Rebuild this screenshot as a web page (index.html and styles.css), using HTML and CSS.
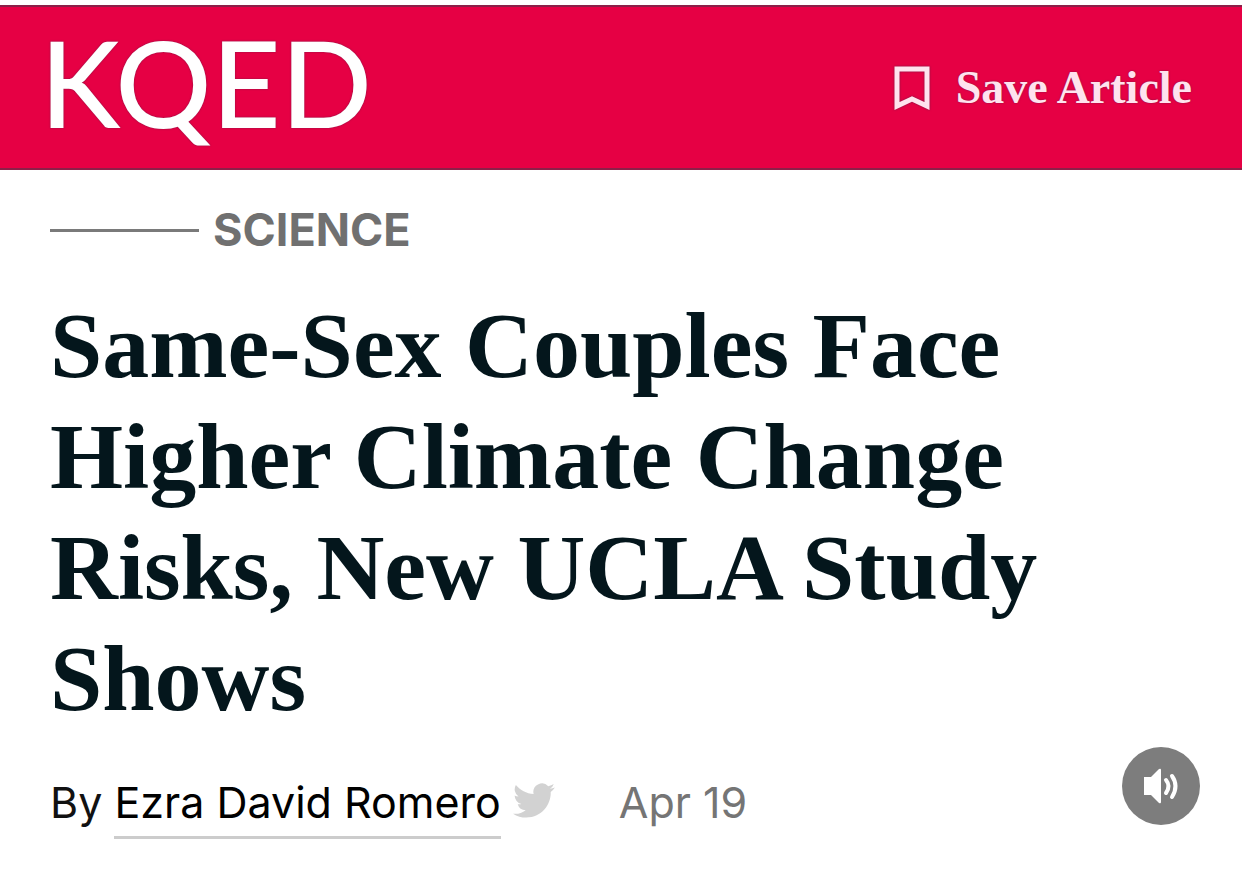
FILE: index.html
```
<!DOCTYPE html>
<html lang="en">
<head>
<meta charset="utf-8">
<meta name="viewport" content="width=device-width, initial-scale=1">
<title>Same-Sex Couples Face Higher Climate Change Risks - KQED</title>
<link rel="stylesheet" href="styles.css">
</head>
<body>
<header class="site-header">
  <a class="logo" href="#">KQED</a>
  <button class="save" type="button">
    <svg class="save-icon" viewBox="0 0 36 44" aria-hidden="true"><path d="M3 3H33V40L18 33L3 40Z" fill="none" stroke="currentColor" stroke-width="5"/></svg>
    <span>Save Article</span>
  </button>
</header>
<main class="article">
  <div class="category"><a class="category-link" href="#">SCIENCE</a></div>
  <h1 class="headline">Same-Sex Couples Face Higher Climate Change Risks, New UCLA Study Shows</h1>
  <div class="meta">
    <span class="byline">By <a class="author" href="#">Ezra David Romero</a></span>
    <a class="twitter" href="#" aria-label="Twitter"><svg viewBox="0 0 24 20" aria-hidden="true"><path fill="currentColor" d="M23.95 2.57a10 10 0 0 1-2.82.77 4.96 4.96 0 0 0 2.16-2.72c-.95.55-2 .95-3.13 1.18a4.92 4.92 0 0 0-8.38 4.48C7.69 6.09 4.07 4.13 1.64 1.16a4.92 4.92 0 0 0 1.52 6.57 4.9 4.9 0 0 1-2.23-.61v.06a4.92 4.92 0 0 0 3.95 4.83 5 5 0 0 1-2.21.08 4.94 4.94 0 0 0 4.6 3.42A9.87 9.87 0 0 1 0 17.54a13.99 13.99 0 0 0 7.56 2.21c9.05 0 14-7.5 14-13.98 0-.21 0-.42-.02-.63a9.94 9.94 0 0 0 2.41-2.57z"/></svg></a>
    <time class="date">Apr 19</time>
  </div>
</main>
<button class="sound" type="button" aria-label="Sound">
  <svg viewBox="0 0 78 78" aria-hidden="true">
    <path d="M22 30H29L37 22Q39 21 39 23V55Q39 57 37 56L29 48H22Z" fill="#fff"/>
    <path d="M44 33Q49 39 44 46M50 29Q57 39 50 50" fill="none" stroke="#fff" stroke-width="4" stroke-linecap="round"/>
  </svg>
</button>
</body>
</html>
```
FILE: styles.css
```
* { box-sizing: border-box; }

body {
  margin: 0;
  padding-top: 5px;
  background: #fff;
  color: #04161c;
  font-family: Inter, "Liberation Sans", sans-serif;
}

a { color: inherit; text-decoration: none; }
svg { display: block; }

.site-header {
  display: flex;
  align-items: center;
  justify-content: space-between;
  padding: 0 50px 0 40px;
  background: #e60044;
  border-top: 2px solid #8c1f48;
  border-bottom: 2px solid #8c1f48;
}

.logo {
  padding-bottom: 10px;
  color: #fff;
  font-family: Lato, sans-serif;
  font-size: 120px;
  font-weight: 500;
  line-height: 151px;
  text-shadow: 0 0 2px #7a1745;
}

.save {
  display: flex;
  align-items: center;
  gap: 26px;
  padding: 0;
  border: 0;
  background: none;
  color: #ffe3ee;
  font-family: "Liberation Serif", serif;
  font-size: 46px;
  font-weight: 700;
  line-height: 52px;
  text-shadow: 0 0 2px #7a1745;
}

.save-icon {
  width: 36px;
  height: 44px;
  filter: drop-shadow(0 0 1px #7a1745);
}

.article { padding: 32px 50px; }

.category {
  display: flex;
  align-items: center;
  gap: 14px;
  color: #707070;
  font-size: 45px;
  font-weight: 700;
  line-height: 56px;
}

.category::before {
  content: "";
  width: 149px;
  height: 3px;
  background: #7a7a7a;
}

.headline {
  margin: 32px 0 0;
  font-family: "Liberation Serif", serif;
  font-size: 94px;
  font-weight: 700;
  line-height: 111px;
}

.meta {
  display: flex;
  align-items: baseline;
  margin-top: 40px;
  font-size: 43px;
  line-height: 56px;
}

.byline { color: #111; }

.author {
  display: inline-block;
  padding-bottom: 6px;
  border-bottom: 3px solid #ccc;
  color: #000;
}

.twitter {
  width: 42px;
  margin-left: 12px;
  color: #d2d2d2;
}

.date {
  margin-left: 64px;
  color: #757575;
}

.sound {
  position: fixed;
  right: 42px;
  bottom: 44px;
  width: 78px;
  height: 78px;
  padding: 0;
  border: 0;
  border-radius: 50%;
  background: #7d7d7d;
}
```
